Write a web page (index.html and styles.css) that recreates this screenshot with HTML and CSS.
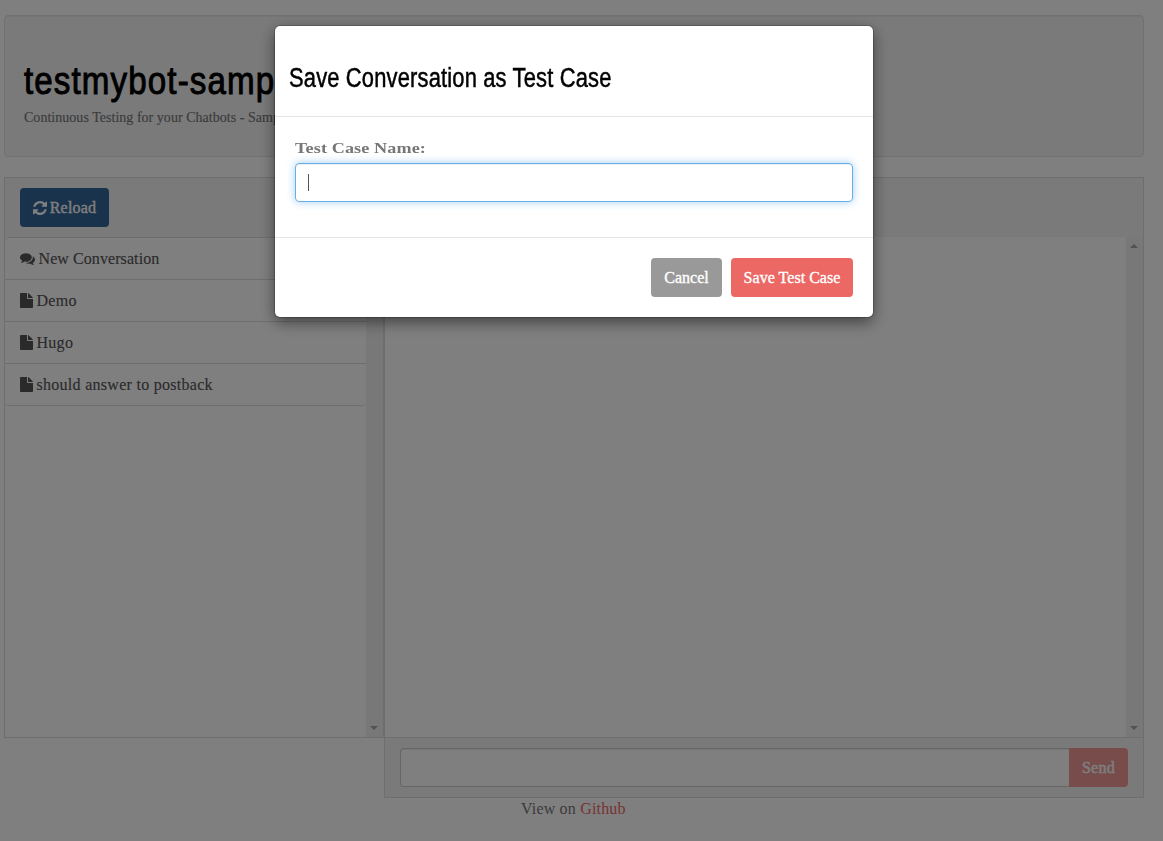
FILE: index.html
```html
<!DOCTYPE html>
<html lang="en">
<head>
<meta charset="utf-8">
<title>testmybot-sample</title>
<link rel="stylesheet" href="styles.css">
</head>
<body>
<svg class="defs" width="0" height="0">
  <symbol id="file" viewBox="0 0 13 15"><path d="M0 .8Q0 0 .8 0H7v5.2q0 .8.8.8H13v8.2q0 .8-.8.8H.8Q0 15 0 14.200zM8 .1q.5.1.9.500l3.500 3.500q.4.4.5.900H8z"/></symbol>
  <symbol id="chat" viewBox="0 0 1792 1792"><path d="M1408 768q0 139-94 257t-256.500 186.500T704 1280q-86 0-176-16-124 88-278 128-36 9-86 16h-3q-11 0-20.500-8t-11.500-21q-1-3-1-6.500t.5-6.500 2-6l2.500-5 3.500-5.500 4-5 4.500-5 4-4.500q5-6 23-25t26-29.500 22.500-29 25-38.500 20.500-44q-124-72-195-177T0 768q0-139 94-257t256.500-186.500T704 256t353.500 68.500T1314 511t94 257zm384 256q0 120-71 224.500T1526 1425q10 24 20.500 44t25 38.500 22.500 29 26 29.500 23 25q1 1 4 4.500t4.500 5 4 5 3.500 5.500l2.500 5 2 6 .5 6.500-1 6.500q-3 14-13 22t-22 7q-50-7-86-16-154-40-278-128-90 16-176 16-271 0-472-132 58 4 88 4 161 0 309-45t264-129q125-92 192-212t67-254q0-77-23-152 129 71 204 178t75 230z"/></symbol>
</svg>
<div class="page">
  <header class="well">
    <h1><span class="condensed">testmybot-sample</span></h1>
    <p class="tagline">Continuous Testing for your Chatbots - Sample</p>
  </header>
  <div class="columns">
    <section class="panel sidebar">
      <div class="panel-head">
        <button class="btn info"><svg class="refresh" viewBox="0 0 1536 1536"><path d="M1511 928q0 5-1 7-64 268-268 434.500T764 1536q-146 0-282.500-55T238 1324l-129 129q-19 19-45 19t-45-19-19-45V960q0-26 19-45t45-19h448q26 0 45 19t19 45-19 45l-137 137q71 66 161 102t187 36q134 0 250-65t186-179q11-17 53-117 8-23 30-23h192q13 0 22.500 9.500t9.500 22.500zm25-800v448q0 26-19 45t-45 19h-448q-26 0-45-19t-19-45 19-45l138-138Q969 256 768 256q-134 0-250 65T332 500q-11 17-53 117-8 23-30 23H50q-13 0-22.500-9.500T18 608v-7q65-268 270-434.500T768 0q146 0 284 55.500T1297 212l130-129q19-19 45-19t45 19 19 45z"/></svg><span>Reload</span></button>
      </div>
      <div class="scroll">
        <ul class="list">
          <li><svg class="chat"><use href="#chat"/></svg><span>New Conversation</span></li>
          <li><svg class="file"><use href="#file"/></svg><span>Demo</span></li>
          <li><svg class="file"><use href="#file"/></svg><span>Hugo</span></li>
          <li><svg class="file"><use href="#file"/></svg><span>should answer to postback</span></li>
        </ul>
        <div class="bar"><i class="up"></i><i class="down"></i></div>
      </div>
    </section>
    <section class="panel chatbox">
      <div class="panel-head"></div>
      <div class="scroll">
        <div class="log"></div>
        <div class="bar"><i class="up"></i><i class="down"></i></div>
      </div>
      <div class="panel-foot"><div class="field"></div><button class="btn send">Send</button></div>
    </section>
  </div>
  <footer>View on <a>Github</a></footer>
</div>
<div class="backdrop">
  <div class="modal">
    <div class="modal-head"><h4><span class="condensed">Save Conversation as Test Case</span></h4></div>
    <div class="modal-body">
      <label><span class="wide">Test Case Name:</span></label>
      <div class="input"><span class="caret"></span></div>
    </div>
    <div class="modal-foot"><button class="btn cancel">Cancel</button><button class="btn save">Save Test Case</button></div>
  </div>
</div>
</body>
</html>
```
FILE: styles.css
```css
* { box-sizing: border-box; }
body { margin: 0; height: 841px; overflow: hidden; background: #fff; color: #777; font: 16px/21px "Liberation Serif", serif; letter-spacing: .18px; }
h1, h4, p, ul { margin: 0; padding: 0; }
svg { fill: currentColor; flex: none; }
.defs { display: block; }
.page { width: 1140px; margin: 15px 0 0 4px; }
.well { height: 142px; padding: 39px 19px 0; background: #f5f5f5; border: 1px solid #e3e3e3; border-radius: 4px; box-shadow: inset 0 1px 1px rgba(0,0,0,.05); }
.condensed { display: inline-block; transform-origin: 0 50%; white-space: nowrap; }
h1 { height: 52px; font: 39px/51px "Liberation Sans", sans-serif; letter-spacing: 1.3px; color: #000; -webkit-text-stroke: 1px #000; }
h1 .condensed { transform: scaleX(.85); }
.tagline { font-size: 14px; letter-spacing: .03px; white-space: nowrap; -webkit-text-stroke: .15px #777; }
.columns { display: flex; align-items: flex-start; margin-top: 20px; }
.panel { width: 380px; border: 1px solid #ddd; }
.chatbox { width: 760px; }
.panel-head { height: 59px; padding: 10px 15px; background: #f5f5f5; }
.scroll { display: flex; height: 500px; }
.list { flex: 1; list-style: none; }
.list li { display: flex; align-items: center; height: 42px; padding: 0 14.5px 1px; border-bottom: 1px solid #ddd; color: #555; white-space: nowrap; letter-spacing: .28px; -webkit-text-stroke: .15px #555; }
.list li:first-child { height: 43px; border-top: 1px solid #ddd; border-top-left-radius: 4px; letter-spacing: .08px; }
.list li:last-child { border-bottom-right-radius: 4px; border-bottom-left-radius: 4px; }
.file { width: 13px; height: 15px; margin-right: 4px; }
.chat { width: 15px; height: 15px; margin-right: 4px; }
.log { flex: 1; }
.bar { display: flex; flex-direction: column; align-items: center; justify-content: space-between; width: 17px; padding: 7px 1px 7px 0; background: #f1f1f1; }
.bar i { width: 0; height: 0; border: 4px solid transparent; }
.bar .up { border-top: 0; border-bottom-color: #a3a3a3; }
.bar .down { border-bottom: 0; border-top-color: #a3a3a3; }
.panel-foot { display: flex; height: 60px; padding: 10px 15px; background: #f5f5f5; border-top: 1px solid #ddd; }
.field { flex: 1; height: 39px; background: #fff; border: 1px solid #ccc; border-right: 0; border-radius: 4px 0 0 4px; box-shadow: inset 0 1px 1px rgba(0,0,0,.075); }
.btn { display: flex; align-items: center; justify-content: center; height: 39px; padding: 0; border: 0; border-radius: 4px; color: #fff; font: 16px/21px "Liberation Serif", serif; letter-spacing: .03px; -webkit-text-stroke: .35px #fff; }
.info { width: 89px; background: #369; letter-spacing: .2px; }
.refresh { width: 14px; height: 14px; margin-right: 3px; }
.send { width: 59px; border-radius: 0 4px 4px 0; background: #eb6864; opacity: .65; letter-spacing: .3px; -webkit-text-stroke-width: .5px; }
footer { padding-left: 517px; }
footer a { color: #eb6864; }
.backdrop { position: fixed; inset: 0; display: flex; align-items: flex-start; padding: 26px 0 0 275px; background: rgba(0,0,0,.5); }
.modal { width: 598px; height: 291px; background: #fff; border-radius: 5px; box-shadow: 0 0 0 1px rgba(0,0,0,.2), 0 5px 15px rgba(0,0,0,.5); }
.modal-head { height: 91px; padding: 34px 14px 0; border-bottom: 1px solid #e5e5e5; }
h4 { font: 27px/36px "Liberation Sans", sans-serif; letter-spacing: .2px; color: #000; -webkit-text-stroke: .5px #000; }
h4 .condensed { transform: scaleX(.812); }
.modal-body { height: 120px; padding: 20px 20px 0; }
label { display: block; height: 26px; font-size: 15.5px; font-weight: bold; letter-spacing: .1px; }
.wide { display: inline-block; transform: scaleX(1.17); transform-origin: 0 50%; }
.input { height: 39px; padding: 10px 12px; border: 1px solid #66afe9; border-radius: 4px; box-shadow: inset 0 1px 1px rgba(0,0,0,.075), 0 0 8px rgba(102,175,233,.6); }
.caret { display: block; width: 1px; height: 17px; background: #555; }
.modal-foot { display: flex; justify-content: flex-end; gap: 9px; padding: 20px; border-top: 1px solid #e5e5e5; }
.cancel { width: 71px; background: #999; }
.save { width: 122px; background: #eb6864; }
```
